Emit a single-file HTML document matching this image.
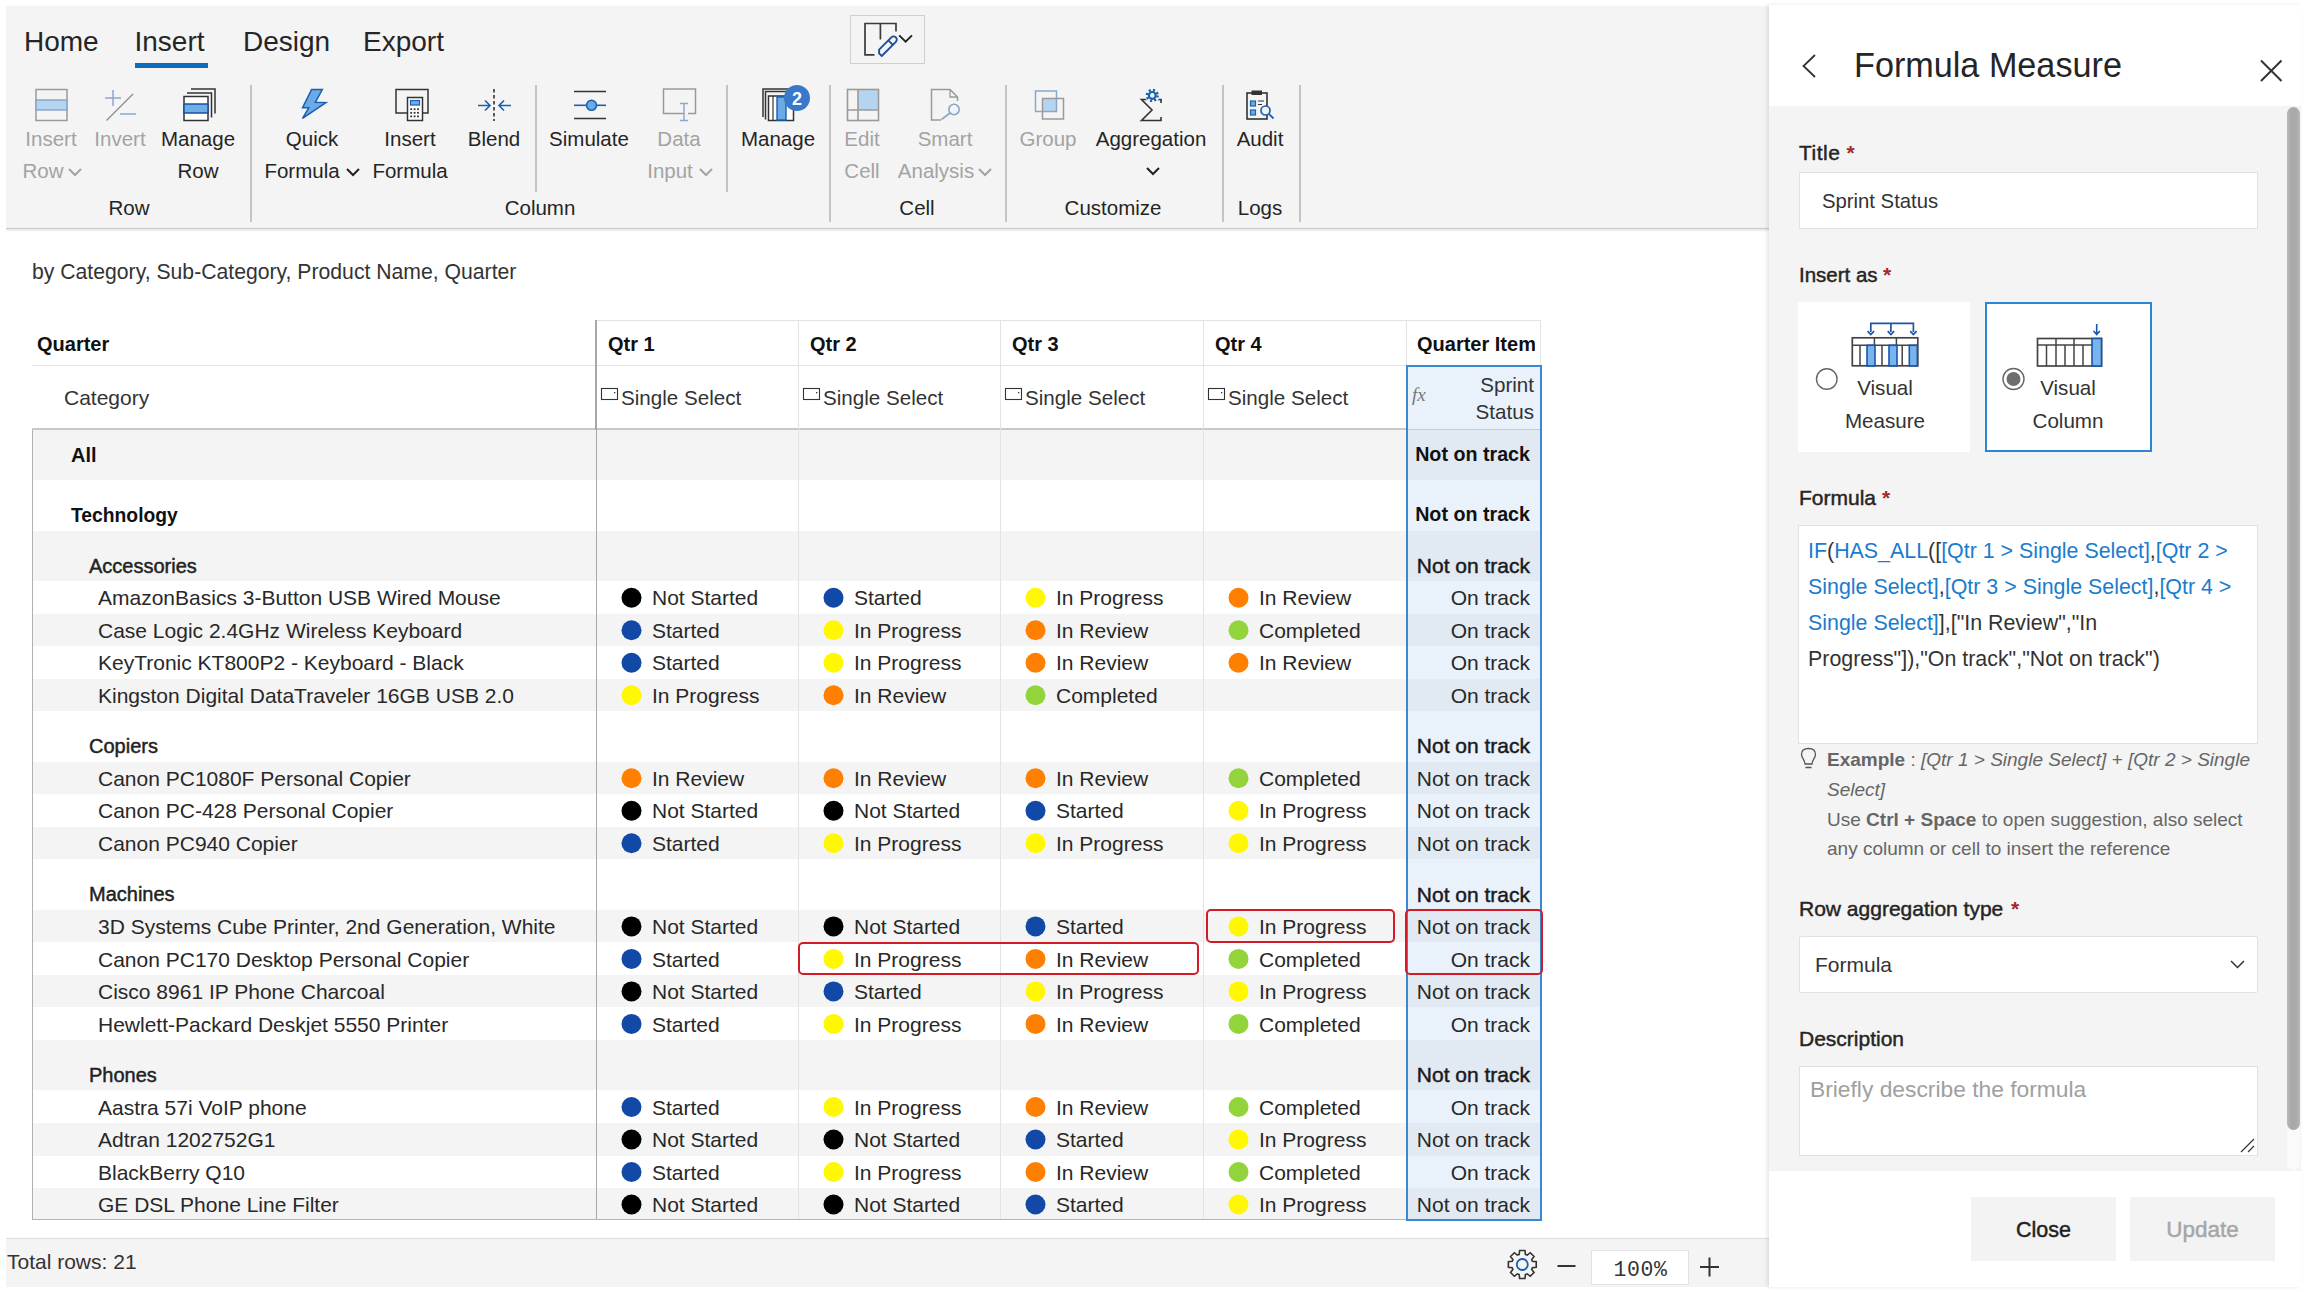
<!DOCTYPE html>
<html><head><meta charset="utf-8"><title>Formula Measure</title>
<style>
html,body{margin:0;padding:0;}
body{width:2304px;height:1292px;position:relative;overflow:hidden;background:#fff;font-family:"Liberation Sans",sans-serif;}
.t{position:absolute;white-space:pre;}
.r{position:absolute;}
svg.ov{position:absolute;left:0;top:0;}
</style></head><body>

<div class="r" style="left:6px;top:6px;width:1763px;height:222px;background:#f4f4f4;"></div>
<div class="r" style="left:6px;top:227px;width:1763px;height:1px;background:#f0f0f0;"></div>
<div class="r" style="left:6px;top:228px;width:1763px;height:1px;background:#cccccc;"></div>
<div class="r" style="left:6px;top:229px;width:1763px;height:3px;background:linear-gradient(#e4e4e4,#ffffff);"></div>
<div class="t" style="top:28.30px;font-size:28px;line-height:28px;color:#252525;left:24.00px;">Home</div>
<div class="t" style="top:28.30px;font-size:28px;line-height:28px;color:#252525;left:134.50px;">Insert</div>
<div class="t" style="top:28.30px;font-size:28px;line-height:28px;color:#252525;left:243.00px;">Design</div>
<div class="t" style="top:28.30px;font-size:28px;line-height:28px;color:#252525;left:363.00px;">Export</div>
<div class="r" style="left:135px;top:63px;width:73px;height:5px;background:#0f6cbd;"></div>
<div class="r" style="left:850px;top:15px;width:75px;height:49px;box-sizing:border-box;border:1px solid #cfcfcf;"></div>
<div class="r" style="left:250px;top:85px;width:2px;height:137px;background:#c4c4c4;"></div>
<div class="r" style="left:535px;top:85px;width:2px;height:107px;background:#c4c4c4;"></div>
<div class="r" style="left:726px;top:85px;width:2px;height:107px;background:#c4c4c4;"></div>
<div class="r" style="left:829px;top:85px;width:2px;height:137px;background:#c4c4c4;"></div>
<div class="r" style="left:1005px;top:85px;width:2px;height:137px;background:#c4c4c4;"></div>
<div class="r" style="left:1222px;top:85px;width:2px;height:137px;background:#c4c4c4;"></div>
<div class="r" style="left:1299px;top:85px;width:2px;height:137px;background:#c4c4c4;"></div>
<div class="t" style="top:128.65px;font-size:20.5px;line-height:20.5px;color:#a3a3a3;left:-549.00px;width:1200px;text-align:center;">Insert</div>
<div class="t" style="top:160.65px;font-size:20.5px;line-height:20.5px;color:#a3a3a3;left:-557.00px;width:1200px;text-align:center;">Row</div>
<div class="t" style="top:128.65px;font-size:20.5px;line-height:20.5px;color:#a3a3a3;left:-480.00px;width:1200px;text-align:center;">Invert</div>
<div class="t" style="top:128.65px;font-size:20.5px;line-height:20.5px;color:#252525;left:-402.00px;width:1200px;text-align:center;">Manage</div>
<div class="t" style="top:160.65px;font-size:20.5px;line-height:20.5px;color:#252525;left:-402.00px;width:1200px;text-align:center;">Row</div>
<div class="t" style="top:197.65px;font-size:20.5px;line-height:20.5px;color:#252525;left:-471.00px;width:1200px;text-align:center;">Row</div>
<div class="t" style="top:128.65px;font-size:20.5px;line-height:20.5px;color:#252525;left:-288.00px;width:1200px;text-align:center;">Quick</div>
<div class="t" style="top:160.65px;font-size:20.5px;line-height:20.5px;color:#252525;left:-298.00px;width:1200px;text-align:center;">Formula</div>
<div class="t" style="top:128.65px;font-size:20.5px;line-height:20.5px;color:#252525;left:-190.00px;width:1200px;text-align:center;">Insert</div>
<div class="t" style="top:160.65px;font-size:20.5px;line-height:20.5px;color:#252525;left:-190.00px;width:1200px;text-align:center;">Formula</div>
<div class="t" style="top:128.65px;font-size:20.5px;line-height:20.5px;color:#252525;left:-106.00px;width:1200px;text-align:center;">Blend</div>
<div class="t" style="top:128.65px;font-size:20.5px;line-height:20.5px;color:#252525;left:-11.00px;width:1200px;text-align:center;">Simulate</div>
<div class="t" style="top:128.65px;font-size:20.5px;line-height:20.5px;color:#a3a3a3;left:79.00px;width:1200px;text-align:center;">Data</div>
<div class="t" style="top:160.65px;font-size:20.5px;line-height:20.5px;color:#a3a3a3;left:70.00px;width:1200px;text-align:center;">Input</div>
<div class="t" style="top:128.65px;font-size:20.5px;line-height:20.5px;color:#252525;left:178.00px;width:1200px;text-align:center;">Manage</div>
<div class="t" style="top:197.65px;font-size:20.5px;line-height:20.5px;color:#252525;left:-60.00px;width:1200px;text-align:center;">Column</div>
<div class="t" style="top:128.65px;font-size:20.5px;line-height:20.5px;color:#a3a3a3;left:262.00px;width:1200px;text-align:center;">Edit</div>
<div class="t" style="top:160.65px;font-size:20.5px;line-height:20.5px;color:#a3a3a3;left:262.00px;width:1200px;text-align:center;">Cell</div>
<div class="t" style="top:128.65px;font-size:20.5px;line-height:20.5px;color:#a3a3a3;left:345.00px;width:1200px;text-align:center;">Smart</div>
<div class="t" style="top:160.65px;font-size:20.5px;line-height:20.5px;color:#a3a3a3;left:336.00px;width:1200px;text-align:center;">Analysis</div>
<div class="t" style="top:197.65px;font-size:20.5px;line-height:20.5px;color:#252525;left:317.00px;width:1200px;text-align:center;">Cell</div>
<div class="t" style="top:128.65px;font-size:20.5px;line-height:20.5px;color:#a3a3a3;left:448.00px;width:1200px;text-align:center;">Group</div>
<div class="t" style="top:128.65px;font-size:20.5px;line-height:20.5px;color:#252525;left:551.00px;width:1200px;text-align:center;">Aggregation</div>
<div class="t" style="top:197.65px;font-size:20.5px;line-height:20.5px;color:#252525;left:513.00px;width:1200px;text-align:center;">Customize</div>
<div class="t" style="top:128.65px;font-size:20.5px;line-height:20.5px;color:#252525;left:660.00px;width:1200px;text-align:center;">Audit</div>
<div class="t" style="top:197.65px;font-size:20.5px;line-height:20.5px;color:#252525;left:660.00px;width:1200px;text-align:center;">Logs</div>
<div class="t" style="top:261.05px;font-size:21.2px;line-height:21.2px;color:#333;left:32.00px;">by Category, Sub-Category, Product Name, Quarter</div>
<div class="r" style="left:596px;top:320px;width:945px;height:1px;background:#e3e3e3;"></div>
<div class="r" style="left:32px;top:365px;width:1374px;height:1px;background:#e3e3e3;"></div>
<div class="r" style="left:32px;top:428px;width:1509px;height:2px;background:#c8c8c8;"></div>
<div class="r" style="left:595px;top:320px;width:2px;height:110px;background:#a8a8a8;"></div>
<div class="r" style="left:798px;top:320px;width:1px;height:110px;background:#e3e3e3;"></div>
<div class="r" style="left:1000px;top:320px;width:1px;height:110px;background:#e3e3e3;"></div>
<div class="r" style="left:1203px;top:320px;width:1px;height:110px;background:#e3e3e3;"></div>
<div class="r" style="left:1406px;top:320px;width:1px;height:110px;background:#e3e3e3;"></div>
<div class="r" style="left:1540px;top:320px;width:1px;height:46px;background:#e3e3e3;"></div>
<div class="t" style="top:334.07px;font-size:20px;line-height:20px;color:#111;font-weight:bold;left:37.00px;">Quarter</div>
<div class="t" style="top:334.07px;font-size:20px;line-height:20px;color:#111;font-weight:bold;left:608.00px;">Qtr 1</div>
<div class="t" style="top:334.07px;font-size:20px;line-height:20px;color:#111;font-weight:bold;left:810.00px;">Qtr 2</div>
<div class="t" style="top:334.07px;font-size:20px;line-height:20px;color:#111;font-weight:bold;left:1012.00px;">Qtr 3</div>
<div class="t" style="top:334.07px;font-size:20px;line-height:20px;color:#111;font-weight:bold;left:1215.00px;">Qtr 4</div>
<div class="t" style="top:334.07px;font-size:20px;line-height:20px;color:#111;font-weight:bold;left:1417.00px;width:118px;overflow:hidden;white-space:nowrap;">Quarter Item</div>
<div class="t" style="top:387.22px;font-size:21px;line-height:21px;color:#333;left:64.00px;">Category</div>
<div class="t" style="top:387.56px;font-size:20.6px;line-height:20.6px;color:#333;left:621.00px;">Single Select</div>
<div class="t" style="top:387.56px;font-size:20.6px;line-height:20.6px;color:#333;left:823.00px;">Single Select</div>
<div class="t" style="top:387.56px;font-size:20.6px;line-height:20.6px;color:#333;left:1025.00px;">Single Select</div>
<div class="t" style="top:387.56px;font-size:20.6px;line-height:20.6px;color:#333;left:1228.00px;">Single Select</div>
<div class="r" style="left:1406px;top:366px;width:135px;height:63px;background:#e9f1fb;"></div>
<div class="t" style="top:384.92px;font-size:19px;line-height:19px;color:#777;font-style:italic;font-family:'Liberation Serif',serif;left:1412.00px;">fx</div>
<div class="t" style="top:374.56px;font-size:20.6px;line-height:20.6px;color:#333;right:770.00px;text-align:right;">Sprint</div>
<div class="t" style="top:401.56px;font-size:20.6px;line-height:20.6px;color:#333;right:770.00px;text-align:right;">Status</div>
<div class="r" style="left:32px;top:430px;width:1374px;height:50px;background:#f4f4f4;"></div>
<div class="r" style="left:1406px;top:430px;width:135px;height:50px;background:#e1e9f2;"></div>
<div class="t" style="top:445.07px;font-size:20px;line-height:20px;color:#111;font-weight:bold;left:71.00px;">All</div>
<div class="t" style="top:445.32px;font-size:19.7px;line-height:19.7px;color:#111;font-weight:bold;right:774.00px;text-align:right;">Not on track</div>
<div class="r" style="left:1406px;top:480px;width:135px;height:51px;background:#e9f1fb;"></div>
<div class="t" style="top:505.66px;font-size:19.3px;line-height:19.3px;color:#111;font-weight:bold;left:71.00px;">Technology</div>
<div class="t" style="top:505.32px;font-size:19.7px;line-height:19.7px;color:#111;font-weight:bold;right:774.00px;text-align:right;">Not on track</div>
<div class="r" style="left:32px;top:531px;width:1374px;height:50px;background:#f4f4f4;"></div>
<div class="r" style="left:1406px;top:531px;width:135px;height:50px;background:#e1e9f2;"></div>
<div class="t" style="top:555.67px;font-size:20px;line-height:20px;color:#222;-webkit-text-stroke:0.45px #222;left:89.00px;">Accessories</div>
<div class="t" style="top:554.82px;font-size:21px;line-height:21px;color:#1a1a1a;-webkit-text-stroke:0.45px #1a1a1a;right:774.00px;text-align:right;">Not on track</div>
<div class="r" style="left:1406px;top:581px;width:135px;height:33px;background:#e9f1fb;"></div>
<div class="t" style="top:587.32px;font-size:21px;line-height:21px;color:#282828;left:98.00px;">AmazonBasics 3-Button USB Wired Mouse</div>
<div class="t" style="top:587.32px;font-size:21px;line-height:21px;color:#282828;left:652.00px;">Not Started</div>
<div class="t" style="top:587.32px;font-size:21px;line-height:21px;color:#282828;left:854.00px;">Started</div>
<div class="t" style="top:587.32px;font-size:21px;line-height:21px;color:#282828;left:1056.00px;">In Progress</div>
<div class="t" style="top:587.32px;font-size:21px;line-height:21px;color:#282828;left:1259.00px;">In Review</div>
<div class="t" style="top:587.32px;font-size:21px;line-height:21px;color:#282828;right:774.00px;text-align:right;">On track</div>
<div class="r" style="left:32px;top:614px;width:1374px;height:32px;background:#f4f4f4;"></div>
<div class="r" style="left:1406px;top:614px;width:135px;height:32px;background:#e1e9f2;"></div>
<div class="t" style="top:619.82px;font-size:21px;line-height:21px;color:#282828;left:98.00px;">Case Logic 2.4GHz Wireless Keyboard</div>
<div class="t" style="top:619.82px;font-size:21px;line-height:21px;color:#282828;left:652.00px;">Started</div>
<div class="t" style="top:619.82px;font-size:21px;line-height:21px;color:#282828;left:854.00px;">In Progress</div>
<div class="t" style="top:619.82px;font-size:21px;line-height:21px;color:#282828;left:1056.00px;">In Review</div>
<div class="t" style="top:619.82px;font-size:21px;line-height:21px;color:#282828;left:1259.00px;">Completed</div>
<div class="t" style="top:619.82px;font-size:21px;line-height:21px;color:#282828;right:774.00px;text-align:right;">On track</div>
<div class="r" style="left:1406px;top:646px;width:135px;height:33px;background:#e9f1fb;"></div>
<div class="t" style="top:652.32px;font-size:21px;line-height:21px;color:#282828;left:98.00px;">KeyTronic KT800P2 - Keyboard - Black</div>
<div class="t" style="top:652.32px;font-size:21px;line-height:21px;color:#282828;left:652.00px;">Started</div>
<div class="t" style="top:652.32px;font-size:21px;line-height:21px;color:#282828;left:854.00px;">In Progress</div>
<div class="t" style="top:652.32px;font-size:21px;line-height:21px;color:#282828;left:1056.00px;">In Review</div>
<div class="t" style="top:652.32px;font-size:21px;line-height:21px;color:#282828;left:1259.00px;">In Review</div>
<div class="t" style="top:652.32px;font-size:21px;line-height:21px;color:#282828;right:774.00px;text-align:right;">On track</div>
<div class="r" style="left:32px;top:679px;width:1374px;height:32px;background:#f4f4f4;"></div>
<div class="r" style="left:1406px;top:679px;width:135px;height:32px;background:#e1e9f2;"></div>
<div class="t" style="top:684.82px;font-size:21px;line-height:21px;color:#282828;left:98.00px;">Kingston Digital DataTraveler 16GB USB 2.0</div>
<div class="t" style="top:684.82px;font-size:21px;line-height:21px;color:#282828;left:652.00px;">In Progress</div>
<div class="t" style="top:684.82px;font-size:21px;line-height:21px;color:#282828;left:854.00px;">In Review</div>
<div class="t" style="top:684.82px;font-size:21px;line-height:21px;color:#282828;left:1056.00px;">Completed</div>
<div class="t" style="top:684.82px;font-size:21px;line-height:21px;color:#282828;right:774.00px;text-align:right;">On track</div>
<div class="r" style="left:1406px;top:711px;width:135px;height:51px;background:#e9f1fb;"></div>
<div class="t" style="top:736.27px;font-size:20px;line-height:20px;color:#222;-webkit-text-stroke:0.45px #222;left:89.00px;">Copiers</div>
<div class="t" style="top:735.42px;font-size:21px;line-height:21px;color:#1a1a1a;-webkit-text-stroke:0.45px #1a1a1a;right:774.00px;text-align:right;">Not on track</div>
<div class="r" style="left:32px;top:762px;width:1374px;height:32px;background:#f4f4f4;"></div>
<div class="r" style="left:1406px;top:762px;width:135px;height:32px;background:#e1e9f2;"></div>
<div class="t" style="top:767.92px;font-size:21px;line-height:21px;color:#282828;left:98.00px;">Canon PC1080F Personal Copier</div>
<div class="t" style="top:767.92px;font-size:21px;line-height:21px;color:#282828;left:652.00px;">In Review</div>
<div class="t" style="top:767.92px;font-size:21px;line-height:21px;color:#282828;left:854.00px;">In Review</div>
<div class="t" style="top:767.92px;font-size:21px;line-height:21px;color:#282828;left:1056.00px;">In Review</div>
<div class="t" style="top:767.92px;font-size:21px;line-height:21px;color:#282828;left:1259.00px;">Completed</div>
<div class="t" style="top:767.92px;font-size:21px;line-height:21px;color:#282828;right:774.00px;text-align:right;">Not on track</div>
<div class="r" style="left:1406px;top:794px;width:135px;height:33px;background:#e9f1fb;"></div>
<div class="t" style="top:800.42px;font-size:21px;line-height:21px;color:#282828;left:98.00px;">Canon PC-428 Personal Copier</div>
<div class="t" style="top:800.42px;font-size:21px;line-height:21px;color:#282828;left:652.00px;">Not Started</div>
<div class="t" style="top:800.42px;font-size:21px;line-height:21px;color:#282828;left:854.00px;">Not Started</div>
<div class="t" style="top:800.42px;font-size:21px;line-height:21px;color:#282828;left:1056.00px;">Started</div>
<div class="t" style="top:800.42px;font-size:21px;line-height:21px;color:#282828;left:1259.00px;">In Progress</div>
<div class="t" style="top:800.42px;font-size:21px;line-height:21px;color:#282828;right:774.00px;text-align:right;">Not on track</div>
<div class="r" style="left:32px;top:827px;width:1374px;height:32px;background:#f4f4f4;"></div>
<div class="r" style="left:1406px;top:827px;width:135px;height:32px;background:#e1e9f2;"></div>
<div class="t" style="top:832.92px;font-size:21px;line-height:21px;color:#282828;left:98.00px;">Canon PC940 Copier</div>
<div class="t" style="top:832.92px;font-size:21px;line-height:21px;color:#282828;left:652.00px;">Started</div>
<div class="t" style="top:832.92px;font-size:21px;line-height:21px;color:#282828;left:854.00px;">In Progress</div>
<div class="t" style="top:832.92px;font-size:21px;line-height:21px;color:#282828;left:1056.00px;">In Progress</div>
<div class="t" style="top:832.92px;font-size:21px;line-height:21px;color:#282828;left:1259.00px;">In Progress</div>
<div class="t" style="top:832.92px;font-size:21px;line-height:21px;color:#282828;right:774.00px;text-align:right;">Not on track</div>
<div class="r" style="left:1406px;top:859px;width:135px;height:51px;background:#e9f1fb;"></div>
<div class="t" style="top:884.37px;font-size:20px;line-height:20px;color:#222;-webkit-text-stroke:0.45px #222;left:89.00px;">Machines</div>
<div class="t" style="top:883.52px;font-size:21px;line-height:21px;color:#1a1a1a;-webkit-text-stroke:0.45px #1a1a1a;right:774.00px;text-align:right;">Not on track</div>
<div class="r" style="left:32px;top:910px;width:1374px;height:32px;background:#f4f4f4;"></div>
<div class="r" style="left:1406px;top:910px;width:135px;height:32px;background:#e1e9f2;"></div>
<div class="t" style="top:916.02px;font-size:21px;line-height:21px;color:#282828;left:98.00px;">3D Systems Cube Printer, 2nd Generation, White</div>
<div class="t" style="top:916.02px;font-size:21px;line-height:21px;color:#282828;left:652.00px;">Not Started</div>
<div class="t" style="top:916.02px;font-size:21px;line-height:21px;color:#282828;left:854.00px;">Not Started</div>
<div class="t" style="top:916.02px;font-size:21px;line-height:21px;color:#282828;left:1056.00px;">Started</div>
<div class="t" style="top:916.02px;font-size:21px;line-height:21px;color:#282828;left:1259.00px;">In Progress</div>
<div class="t" style="top:916.02px;font-size:21px;line-height:21px;color:#282828;right:774.00px;text-align:right;">Not on track</div>
<div class="r" style="left:1406px;top:942px;width:135px;height:33px;background:#e9f1fb;"></div>
<div class="t" style="top:948.52px;font-size:21px;line-height:21px;color:#282828;left:98.00px;">Canon PC170 Desktop Personal Copier</div>
<div class="t" style="top:948.52px;font-size:21px;line-height:21px;color:#282828;left:652.00px;">Started</div>
<div class="t" style="top:948.52px;font-size:21px;line-height:21px;color:#282828;left:854.00px;">In Progress</div>
<div class="t" style="top:948.52px;font-size:21px;line-height:21px;color:#282828;left:1056.00px;">In Review</div>
<div class="t" style="top:948.52px;font-size:21px;line-height:21px;color:#282828;left:1259.00px;">Completed</div>
<div class="t" style="top:948.52px;font-size:21px;line-height:21px;color:#282828;right:774.00px;text-align:right;">On track</div>
<div class="r" style="left:32px;top:975px;width:1374px;height:32px;background:#f4f4f4;"></div>
<div class="r" style="left:1406px;top:975px;width:135px;height:32px;background:#e1e9f2;"></div>
<div class="t" style="top:981.02px;font-size:21px;line-height:21px;color:#282828;left:98.00px;">Cisco 8961 IP Phone Charcoal</div>
<div class="t" style="top:981.02px;font-size:21px;line-height:21px;color:#282828;left:652.00px;">Not Started</div>
<div class="t" style="top:981.02px;font-size:21px;line-height:21px;color:#282828;left:854.00px;">Started</div>
<div class="t" style="top:981.02px;font-size:21px;line-height:21px;color:#282828;left:1056.00px;">In Progress</div>
<div class="t" style="top:981.02px;font-size:21px;line-height:21px;color:#282828;left:1259.00px;">In Progress</div>
<div class="t" style="top:981.02px;font-size:21px;line-height:21px;color:#282828;right:774.00px;text-align:right;">Not on track</div>
<div class="r" style="left:1406px;top:1007px;width:135px;height:33px;background:#e9f1fb;"></div>
<div class="t" style="top:1013.52px;font-size:21px;line-height:21px;color:#282828;left:98.00px;">Hewlett-Packard Deskjet 5550 Printer</div>
<div class="t" style="top:1013.52px;font-size:21px;line-height:21px;color:#282828;left:652.00px;">Started</div>
<div class="t" style="top:1013.52px;font-size:21px;line-height:21px;color:#282828;left:854.00px;">In Progress</div>
<div class="t" style="top:1013.52px;font-size:21px;line-height:21px;color:#282828;left:1056.00px;">In Review</div>
<div class="t" style="top:1013.52px;font-size:21px;line-height:21px;color:#282828;left:1259.00px;">Completed</div>
<div class="t" style="top:1013.52px;font-size:21px;line-height:21px;color:#282828;right:774.00px;text-align:right;">On track</div>
<div class="r" style="left:32px;top:1040px;width:1374px;height:50px;background:#f4f4f4;"></div>
<div class="r" style="left:1406px;top:1040px;width:135px;height:50px;background:#e1e9f2;"></div>
<div class="t" style="top:1064.97px;font-size:20px;line-height:20px;color:#222;-webkit-text-stroke:0.45px #222;left:89.00px;">Phones</div>
<div class="t" style="top:1064.12px;font-size:21px;line-height:21px;color:#1a1a1a;-webkit-text-stroke:0.45px #1a1a1a;right:774.00px;text-align:right;">Not on track</div>
<div class="r" style="left:1406px;top:1090px;width:135px;height:33px;background:#e9f1fb;"></div>
<div class="t" style="top:1096.62px;font-size:21px;line-height:21px;color:#282828;left:98.00px;">Aastra 57i VoIP phone</div>
<div class="t" style="top:1096.62px;font-size:21px;line-height:21px;color:#282828;left:652.00px;">Started</div>
<div class="t" style="top:1096.62px;font-size:21px;line-height:21px;color:#282828;left:854.00px;">In Progress</div>
<div class="t" style="top:1096.62px;font-size:21px;line-height:21px;color:#282828;left:1056.00px;">In Review</div>
<div class="t" style="top:1096.62px;font-size:21px;line-height:21px;color:#282828;left:1259.00px;">Completed</div>
<div class="t" style="top:1096.62px;font-size:21px;line-height:21px;color:#282828;right:774.00px;text-align:right;">On track</div>
<div class="r" style="left:32px;top:1123px;width:1374px;height:33px;background:#f4f4f4;"></div>
<div class="r" style="left:1406px;top:1123px;width:135px;height:33px;background:#e1e9f2;"></div>
<div class="t" style="top:1129.12px;font-size:21px;line-height:21px;color:#282828;left:98.00px;">Adtran 1202752G1</div>
<div class="t" style="top:1129.12px;font-size:21px;line-height:21px;color:#282828;left:652.00px;">Not Started</div>
<div class="t" style="top:1129.12px;font-size:21px;line-height:21px;color:#282828;left:854.00px;">Not Started</div>
<div class="t" style="top:1129.12px;font-size:21px;line-height:21px;color:#282828;left:1056.00px;">Started</div>
<div class="t" style="top:1129.12px;font-size:21px;line-height:21px;color:#282828;left:1259.00px;">In Progress</div>
<div class="t" style="top:1129.12px;font-size:21px;line-height:21px;color:#282828;right:774.00px;text-align:right;">Not on track</div>
<div class="r" style="left:1406px;top:1156px;width:135px;height:32px;background:#e9f1fb;"></div>
<div class="t" style="top:1161.62px;font-size:21px;line-height:21px;color:#282828;left:98.00px;">BlackBerry Q10</div>
<div class="t" style="top:1161.62px;font-size:21px;line-height:21px;color:#282828;left:652.00px;">Started</div>
<div class="t" style="top:1161.62px;font-size:21px;line-height:21px;color:#282828;left:854.00px;">In Progress</div>
<div class="t" style="top:1161.62px;font-size:21px;line-height:21px;color:#282828;left:1056.00px;">In Review</div>
<div class="t" style="top:1161.62px;font-size:21px;line-height:21px;color:#282828;left:1259.00px;">Completed</div>
<div class="t" style="top:1161.62px;font-size:21px;line-height:21px;color:#282828;right:774.00px;text-align:right;">On track</div>
<div class="r" style="left:32px;top:1188px;width:1374px;height:32px;background:#f4f4f4;"></div>
<div class="r" style="left:1406px;top:1188px;width:135px;height:32px;background:#e1e9f2;"></div>
<div class="t" style="top:1194.12px;font-size:21px;line-height:21px;color:#282828;left:98.00px;">GE DSL Phone Line Filter</div>
<div class="t" style="top:1194.12px;font-size:21px;line-height:21px;color:#282828;left:652.00px;">Not Started</div>
<div class="t" style="top:1194.12px;font-size:21px;line-height:21px;color:#282828;left:854.00px;">Not Started</div>
<div class="t" style="top:1194.12px;font-size:21px;line-height:21px;color:#282828;left:1056.00px;">Started</div>
<div class="t" style="top:1194.12px;font-size:21px;line-height:21px;color:#282828;left:1259.00px;">In Progress</div>
<div class="t" style="top:1194.12px;font-size:21px;line-height:21px;color:#282828;right:774.00px;text-align:right;">Not on track</div>
<div class="r" style="left:32px;top:430px;width:1px;height:790px;background:#b0b0b0;"></div>
<div class="r" style="left:596px;top:430px;width:1px;height:790px;background:#a8a8a8;"></div>
<div class="r" style="left:798px;top:430px;width:1px;height:790px;background:#e3e3e3;"></div>
<div class="r" style="left:1000px;top:430px;width:1px;height:790px;background:#e3e3e3;"></div>
<div class="r" style="left:1203px;top:430px;width:1px;height:790px;background:#e3e3e3;"></div>
<div class="r" style="left:32px;top:1219px;width:1374px;height:1px;background:#b5b5b5;"></div>
<div class="r" style="left:1406px;top:365px;width:136px;height:856px;box-sizing:border-box;border:2px solid #3a88d0;"></div>
<div class="r" style="left:798px;top:942px;width:401px;height:33px;box-sizing:border-box;border:2.6px solid #d41a26;border-radius:5px;"></div>
<div class="r" style="left:1206px;top:909px;width:189px;height:34px;box-sizing:border-box;border:2.6px solid #d41a26;border-radius:5px;"></div>
<div class="r" style="left:1405px;top:909px;width:138px;height:66px;box-sizing:border-box;border:2.6px solid #d41a26;border-radius:5px;"></div>
<div class="r" style="left:6px;top:1238px;width:1763px;height:1px;background:#dedede;"></div>
<div class="r" style="left:6px;top:1239px;width:1763px;height:48px;background:#f4f4f4;"></div>
<div class="t" style="top:1251.22px;font-size:21px;line-height:21px;color:#333;left:7.00px;">Total rows: 21</div>
<div class="r" style="left:1591px;top:1250px;width:98px;height:35px;background:#fff;box-sizing:border-box;border:1px solid #e2e2e2;"></div>
<div class="t" style="top:1259.80px;font-size:21.5px;line-height:21.5px;color:#333;font-family:'Liberation Mono',monospace;letter-spacing:0.6px;left:1040.50px;width:1200px;text-align:center;">100%</div>
<div class="r" style="left:1769px;top:5px;width:532px;height:1282px;background:#fff;box-shadow:-2px 0 4px rgba(0,0,0,0.10);"></div>
<div class="r" style="left:1769px;top:106px;width:532px;height:1065px;background:#f4f4f4;"></div>
<div class="r" style="left:2287px;top:107px;width:13px;height:1063px;background:#fafafa;border-radius:6.5px;"></div>
<div class="r" style="left:2287px;top:107px;width:13px;height:1023px;background:linear-gradient(90deg,#b9b9b9,#a9a9a9 30%,#a9a9a9 70%,#b9b9b9);border-radius:6.5px;"></div>
<div class="t" style="top:48.05px;font-size:34.2px;line-height:34.2px;color:#252525;left:1854.00px;">Formula Measure</div>
<div class="t" style="top:141.72px;font-size:21px;line-height:21px;color:#252525;-webkit-text-stroke:0.45px #252525;letter-spacing:0.5px;left:1799.00px;">Title</div>
<div class="t" style="top:141.72px;font-size:21px;line-height:21px;color:#a4262c;font-weight:bold;left:1846.50px;">*</div>
<div class="r" style="left:1799px;top:172px;width:459px;height:57px;background:#fff;box-sizing:border-box;border:1px solid #e1e1e1;"></div>
<div class="t" style="top:190.82px;font-size:20.3px;line-height:20.3px;color:#333;left:1822.00px;">Sprint Status</div>
<div class="t" style="top:264.65px;font-size:20.5px;line-height:20.5px;color:#252525;-webkit-text-stroke:0.45px #252525;left:1799.00px;">Insert as</div>
<div class="t" style="top:264.22px;font-size:21px;line-height:21px;color:#a4262c;font-weight:bold;left:1883.00px;">*</div>
<div class="r" style="left:1798px;top:302px;width:172px;height:150px;background:#fff;"></div>
<div class="r" style="left:1985px;top:302px;width:167px;height:150px;background:#fff;box-sizing:border-box;border:2px solid #2c86d6;"></div>
<div class="t" style="top:378.06px;font-size:20.6px;line-height:20.6px;color:#333;left:1285.00px;width:1200px;text-align:center;">Visual</div>
<div class="t" style="top:410.56px;font-size:20.6px;line-height:20.6px;color:#333;left:1285.00px;width:1200px;text-align:center;">Measure</div>
<div class="t" style="top:378.06px;font-size:20.6px;line-height:20.6px;color:#333;left:1468.00px;width:1200px;text-align:center;">Visual</div>
<div class="t" style="top:410.56px;font-size:20.6px;line-height:20.6px;color:#333;left:1468.00px;width:1200px;text-align:center;">Column</div>
<div class="t" style="top:487.22px;font-size:21px;line-height:21px;color:#252525;-webkit-text-stroke:0.45px #252525;left:1799.00px;">Formula</div>
<div class="t" style="top:487.22px;font-size:21px;line-height:21px;color:#a4262c;font-weight:bold;left:1882.00px;">*</div>
<div class="r" style="left:1798px;top:525px;width:460px;height:219px;background:#fff;box-sizing:border-box;border:1px solid #e1e1e1;"></div>
<div class="t" style="top:540.88px;font-size:21.4px;line-height:21.4px;color:#333;left:1808.00px;white-space:nowrap;"><span style="color:#1a7ccd">IF</span><span style="color:#333">(</span><span style="color:#1a7ccd">HAS_ALL</span><span style="color:#333">([</span><span style="color:#1a7ccd">[Qtr 1 &gt; Single Select]</span><span style="color:#333">,</span><span style="color:#1a7ccd">[Qtr 2 &gt;</span></div>
<div class="t" style="top:576.88px;font-size:21.4px;line-height:21.4px;color:#333;left:1808.00px;white-space:nowrap;"><span style="color:#1a7ccd">Single Select]</span><span style="color:#333">,</span><span style="color:#1a7ccd">[Qtr 3 &gt; Single Select]</span><span style="color:#333">,</span><span style="color:#1a7ccd">[Qtr 4 &gt;</span></div>
<div class="t" style="top:612.88px;font-size:21.4px;line-height:21.4px;color:#333;left:1808.00px;white-space:nowrap;"><span style="color:#1a7ccd">Single Select]</span><span style="color:#333">],["In Review","In</span></div>
<div class="t" style="top:648.88px;font-size:21.4px;line-height:21.4px;color:#333;left:1808.00px;white-space:nowrap;">Progress"]),"On track","Not on track")</div>
<div class="t" style="top:749.92px;font-size:19px;line-height:19px;color:#666;left:1827.00px;white-space:nowrap;"><b>Example</b> : <i>[Qtr 1 &gt; Single Select] + [Qtr 2 &gt; Single</i></div>
<div class="t" style="top:779.92px;font-size:19px;line-height:19px;color:#666;left:1827.00px;"><i>Select]</i></div>
<div class="t" style="top:809.92px;font-size:19px;line-height:19px;color:#666;left:1827.00px;white-space:nowrap;">Use <b>Ctrl + Space</b> to open suggestion, also select</div>
<div class="t" style="top:838.92px;font-size:19px;line-height:19px;color:#666;left:1827.00px;white-space:nowrap;">any column or cell to insert the reference</div>
<div class="t" style="top:898.22px;font-size:21px;line-height:21px;color:#252525;-webkit-text-stroke:0.45px #252525;left:1799.00px;">Row aggregation type</div>
<div class="t" style="top:898.22px;font-size:21px;line-height:21px;color:#a4262c;font-weight:bold;left:2011.00px;">*</div>
<div class="r" style="left:1799px;top:936px;width:459px;height:57px;background:#fff;box-sizing:border-box;border:1px solid #e1e1e1;border-radius:2px;"></div>
<div class="t" style="top:954.22px;font-size:21px;line-height:21px;color:#333;left:1815.00px;">Formula</div>
<div class="t" style="top:1028.22px;font-size:21px;line-height:21px;color:#252525;-webkit-text-stroke:0.45px #252525;left:1799.00px;">Description</div>
<div class="r" style="left:1799px;top:1066px;width:459px;height:90px;background:#fff;box-sizing:border-box;border:1px solid #e1e1e1;"></div>
<div class="t" style="top:1077.70px;font-size:22.8px;line-height:22.8px;color:#a0a0a0;left:1810.00px;">Briefly describe the formula</div>
<div class="r" style="left:1971px;top:1197px;width:145px;height:64px;background:#f3f3f3;"></div>
<div class="r" style="left:2130px;top:1197px;width:145px;height:64px;background:#f3f3f3;"></div>
<div class="t" style="top:1220.30px;font-size:21.5px;line-height:21.5px;color:#222;-webkit-text-stroke:0.45px #222;left:1443.50px;width:1200px;text-align:center;">Close</div>
<div class="t" style="top:1219.45px;font-size:22.5px;line-height:22.5px;color:#a6a6a6;-webkit-text-stroke:0.45px #a6a6a6;left:1602.50px;width:1200px;text-align:center;">Update</div>
<svg class="ov" width="2304" height="1292" viewBox="0 0 2304 1292">
<path d="M874.5 54.8 H865 V23.5 H896 V31.5 M880.4 23.5 V39.5" fill="none" stroke="#3a3a3a" stroke-width="1.7"/>
<g transform="translate(887.6,45.6) rotate(-45)"><path d="M-11.5 3.2 V-0.5 L-8.8 -3.2 H8.5 A3.2 3.2 0 0 1 8.5 3.2 Z" fill="#f4f4f4" stroke="#1a4fa0" stroke-width="1.9" stroke-linejoin="round"/><path d="M4.2 -3.2 V3.2" stroke="#1a4fa0" stroke-width="2"/></g>
<path d="M899.2 35.3 L905.6 41.7 L912 35.3" fill="none" stroke="#222" stroke-width="1.9"/>
<path d="M69 169 L75 175 L81 169" fill="none" stroke="#a3a3a3" stroke-width="2"/>
<path d="M347 169 L353 175 L359 169" fill="none" stroke="#222" stroke-width="2"/>
<path d="M700 169 L706 175 L712 169" fill="none" stroke="#a3a3a3" stroke-width="2"/>
<path d="M979 169 L985 175 L991 169" fill="none" stroke="#a3a3a3" stroke-width="2"/>
<path d="M1147 168 L1153 174 L1159 168" fill="none" stroke="#222" stroke-width="2"/>
<rect x="36" y="89.5" width="31" height="31" fill="none" stroke="#9a9a9a" stroke-width="1.5"/>
<rect x="36" y="100" width="31" height="10" fill="#b4d4f0" stroke="#8aa6c8" stroke-width="1.5"/>
<path d="M113 90 V106 M105 98 H121 M120 114 H136" stroke="#8aa6c8" stroke-width="1.5" fill="none"/>
<path d="M106.5 120.5 L133 94" stroke="#8c8c8c" stroke-width="1.3" fill="none"/>
<path d="M191 89 H215 V113.5 M187 93 H211.5 V117.5" stroke="#333" stroke-width="1.5" fill="none"/>
<rect x="184" y="96.5" width="24" height="24" fill="#fff" stroke="#333" stroke-width="1.5"/>
<rect x="184" y="104" width="24" height="9" fill="#6caee8" stroke="#1a4f9c" stroke-width="1.5"/>
<path d="M311.6 89.5 L322.3 89.5 L315.3 102.3 L325.9 102.6 L302.5 118.4 L308.75 107.8 L302.5 107.8 Z" fill="#6aaae6" stroke="#1b5fb0" stroke-width="1.5" stroke-linejoin="miter"/>
<path d="M407 113 H396 V89.5 H428 V113 H423" fill="none" stroke="#333" stroke-width="1.5"/>
<rect x="407.5" y="97.5" width="15" height="23" fill="#fff" stroke="#333" stroke-width="1.5"/>
<rect x="410.5" y="100.5" width="9" height="4.5" fill="#6caee8" stroke="#1b5fb0" stroke-width="1.2"/>
<rect x="410.3" y="108.3" width="1.8" height="1.8" fill="#333"/>
<rect x="410.3" y="111.9" width="1.8" height="1.8" fill="#333"/>
<rect x="410.3" y="115.5" width="1.8" height="1.8" fill="#333"/>
<rect x="413.7" y="108.3" width="1.8" height="1.8" fill="#333"/>
<rect x="413.7" y="111.9" width="1.8" height="1.8" fill="#333"/>
<rect x="413.7" y="115.5" width="1.8" height="1.8" fill="#333"/>
<rect x="417.1" y="108.3" width="1.8" height="1.8" fill="#333"/>
<rect x="417.1" y="111.9" width="1.8" height="1.8" fill="#333"/>
<rect x="417.1" y="115.5" width="1.8" height="1.8" fill="#333"/>
<path d="M494 89 V121" stroke="#333" stroke-width="1.6" stroke-dasharray="3.5 2.5" fill="none"/>
<path d="M478 105.5 H490 M485 100.5 L490 105.5 L485 110.5 M511 105.5 H499 M504 100.5 L499 105.5 L504 110.5" stroke="#1b5fb0" stroke-width="1.6" fill="none"/>
<path d="M574 91.5 H606 M574 118.5 H606" stroke="#333" stroke-width="1.6" fill="none"/>
<path d="M574 105.3 H606" stroke="#1b5fb0" stroke-width="1.6" fill="none"/>
<circle cx="591.5" cy="105.3" r="5" fill="#6aaae6" stroke="#1b5fb0" stroke-width="1.6"/>
<path d="M684 113.5 H663.5 V89 H695.5 V113.5 H688" fill="none" stroke="#9a9a9a" stroke-width="1.5"/>
<path d="M684 103.5 V120.5 M680 103.5 H688 M680 120.5 H688" stroke="#8aa6c8" stroke-width="1.4" fill="none"/>
<path d="M763 117 V89 H789 M765.5 119.5 V91.5 H791" stroke="#333" stroke-width="1.5" fill="none"/>
<rect x="768.5" y="96" width="25" height="24.5" fill="#fff" stroke="#333" stroke-width="1.5"/>
<path d="M773 96 V120.5" stroke="#333" stroke-width="1.2"/>
<rect x="777" y="97" width="9" height="23" fill="#6aaae6" stroke="#1b5fb0" stroke-width="1.4"/>
<circle cx="797" cy="98" r="13" fill="#3a78c9"/>
<text x="797" y="104.5" font-family="Liberation Sans" font-weight="bold" font-size="18" fill="#fff" text-anchor="middle">2</text>
<rect x="858" y="89.5" width="20.5" height="20.5" fill="#b4d4f0"/>
<rect x="847.5" y="89.5" width="31" height="31" fill="none" stroke="#9a9a9a" stroke-width="1.6"/>
<path d="M858 89.5 V120.5 M847.5 110 H878.5" stroke="#9a9a9a" stroke-width="1.6" fill="none"/>
<path d="M941 120 H931.5 V89.5 H950 L957.5 97 V101" fill="none" stroke="#9a9a9a" stroke-width="1.5"/>
<path d="M950 89.5 V97 H957.5" fill="none" stroke="#9a9a9a" stroke-width="1.3"/>
<circle cx="954" cy="109.5" r="5.2" fill="none" stroke="#8aa6c8" stroke-width="1.6"/>
<path d="M941.5 119.5 L950 113" stroke="#8aa6c8" stroke-width="1.6"/>
<rect x="1042.5" y="98.5" width="14" height="13" fill="#b4d4f0"/>
<rect x="1035.5" y="91" width="21" height="20.5" fill="none" stroke="#8aa6c8" stroke-width="1.5"/>
<rect x="1042.5" y="98.5" width="21" height="20.5" fill="none" stroke="#9a9a9a" stroke-width="1.5"/>
<path d="M1161 103 V99.5 H1141.5 L1152 110 L1141.5 120.5 H1161 V117" fill="none" stroke="#333" stroke-width="1.6"/>
<circle cx="1152.3" cy="95.4" r="7.5" fill="#f4f4f4"/>
<circle cx="1152.3" cy="95.4" r="3.4" fill="none" stroke="#1b5fb0" stroke-width="2.2"/>
<circle cx="1152.3" cy="95.4" r="5.4" fill="none" stroke="#1b5fb0" stroke-width="2.4" stroke-dasharray="2.1 2.14"/>
<rect x="1247" y="93" width="20" height="26" fill="none" stroke="#333" stroke-width="1.6"/>
<rect x="1251.5" y="90.5" width="10.5" height="4.5" fill="#333"/>
<rect x="1250.5" y="101" width="5" height="5" fill="#6aaae6" stroke="#1b5fb0" stroke-width="1.2"/>
<rect x="1250.5" y="110" width="5" height="5" fill="#6aaae6" stroke="#1b5fb0" stroke-width="1.2"/>
<path d="M1258 101 H1264 M1258 104.5 H1262" stroke="#333" stroke-width="1.2"/>
<circle cx="1265.5" cy="110.5" r="4.5" fill="#f4f4f4" stroke="#1b5fb0" stroke-width="1.7"/>
<path d="M1268.8 113.8 L1273.5 118.5" stroke="#1b5fb0" stroke-width="1.8"/>
<rect x="601.5" y="388.5" width="16" height="11" fill="none" stroke="#333" stroke-width="1.1"/>
<rect x="614" y="392" width="1.3" height="1.3" fill="#333"/>
<rect x="803.5" y="388.5" width="16" height="11" fill="none" stroke="#333" stroke-width="1.1"/>
<rect x="816" y="392" width="1.3" height="1.3" fill="#333"/>
<rect x="1005.5" y="388.5" width="16" height="11" fill="none" stroke="#333" stroke-width="1.1"/>
<rect x="1018" y="392" width="1.3" height="1.3" fill="#333"/>
<rect x="1208.5" y="388.5" width="16" height="11" fill="none" stroke="#333" stroke-width="1.1"/>
<rect x="1221" y="392" width="1.3" height="1.3" fill="#333"/>
<circle cx="631.5" cy="597.70" r="10" fill="#000000"/>
<circle cx="833.5" cy="597.70" r="10" fill="#1249a6"/>
<circle cx="1035.5" cy="597.70" r="10" fill="#fff800"/>
<circle cx="1238.5" cy="597.70" r="10" fill="#ff8000"/>
<circle cx="631.5" cy="630.20" r="10" fill="#1249a6"/>
<circle cx="833.5" cy="630.20" r="10" fill="#fff800"/>
<circle cx="1035.5" cy="630.20" r="10" fill="#ff8000"/>
<circle cx="1238.5" cy="630.20" r="10" fill="#93d43c"/>
<circle cx="631.5" cy="662.70" r="10" fill="#1249a6"/>
<circle cx="833.5" cy="662.70" r="10" fill="#fff800"/>
<circle cx="1035.5" cy="662.70" r="10" fill="#ff8000"/>
<circle cx="1238.5" cy="662.70" r="10" fill="#ff8000"/>
<circle cx="631.5" cy="695.20" r="10" fill="#fff800"/>
<circle cx="833.5" cy="695.20" r="10" fill="#ff8000"/>
<circle cx="1035.5" cy="695.20" r="10" fill="#93d43c"/>
<circle cx="631.5" cy="778.30" r="10" fill="#ff8000"/>
<circle cx="833.5" cy="778.30" r="10" fill="#ff8000"/>
<circle cx="1035.5" cy="778.30" r="10" fill="#ff8000"/>
<circle cx="1238.5" cy="778.30" r="10" fill="#93d43c"/>
<circle cx="631.5" cy="810.80" r="10" fill="#000000"/>
<circle cx="833.5" cy="810.80" r="10" fill="#000000"/>
<circle cx="1035.5" cy="810.80" r="10" fill="#1249a6"/>
<circle cx="1238.5" cy="810.80" r="10" fill="#fff800"/>
<circle cx="631.5" cy="843.30" r="10" fill="#1249a6"/>
<circle cx="833.5" cy="843.30" r="10" fill="#fff800"/>
<circle cx="1035.5" cy="843.30" r="10" fill="#fff800"/>
<circle cx="1238.5" cy="843.30" r="10" fill="#fff800"/>
<circle cx="631.5" cy="926.40" r="10" fill="#000000"/>
<circle cx="833.5" cy="926.40" r="10" fill="#000000"/>
<circle cx="1035.5" cy="926.40" r="10" fill="#1249a6"/>
<circle cx="1238.5" cy="926.40" r="10" fill="#fff800"/>
<circle cx="631.5" cy="958.90" r="10" fill="#1249a6"/>
<circle cx="833.5" cy="958.90" r="10" fill="#fff800"/>
<circle cx="1035.5" cy="958.90" r="10" fill="#ff8000"/>
<circle cx="1238.5" cy="958.90" r="10" fill="#93d43c"/>
<circle cx="631.5" cy="991.40" r="10" fill="#000000"/>
<circle cx="833.5" cy="991.40" r="10" fill="#1249a6"/>
<circle cx="1035.5" cy="991.40" r="10" fill="#fff800"/>
<circle cx="1238.5" cy="991.40" r="10" fill="#fff800"/>
<circle cx="631.5" cy="1023.90" r="10" fill="#1249a6"/>
<circle cx="833.5" cy="1023.90" r="10" fill="#fff800"/>
<circle cx="1035.5" cy="1023.90" r="10" fill="#ff8000"/>
<circle cx="1238.5" cy="1023.90" r="10" fill="#93d43c"/>
<circle cx="631.5" cy="1107.00" r="10" fill="#1249a6"/>
<circle cx="833.5" cy="1107.00" r="10" fill="#fff800"/>
<circle cx="1035.5" cy="1107.00" r="10" fill="#ff8000"/>
<circle cx="1238.5" cy="1107.00" r="10" fill="#93d43c"/>
<circle cx="631.5" cy="1139.50" r="10" fill="#000000"/>
<circle cx="833.5" cy="1139.50" r="10" fill="#000000"/>
<circle cx="1035.5" cy="1139.50" r="10" fill="#1249a6"/>
<circle cx="1238.5" cy="1139.50" r="10" fill="#fff800"/>
<circle cx="631.5" cy="1172.00" r="10" fill="#1249a6"/>
<circle cx="833.5" cy="1172.00" r="10" fill="#fff800"/>
<circle cx="1035.5" cy="1172.00" r="10" fill="#ff8000"/>
<circle cx="1238.5" cy="1172.00" r="10" fill="#93d43c"/>
<circle cx="631.5" cy="1204.50" r="10" fill="#000000"/>
<circle cx="833.5" cy="1204.50" r="10" fill="#000000"/>
<circle cx="1035.5" cy="1204.50" r="10" fill="#1249a6"/>
<circle cx="1238.5" cy="1204.50" r="10" fill="#fff800"/>
<polygon points="1536.24,1261.82 1536.24,1267.18 1532.43,1267.63 1531.68,1269.45 1534.06,1272.46 1530.26,1276.26 1527.25,1273.88 1525.43,1274.63 1524.98,1278.44 1519.62,1278.44 1519.17,1274.63 1517.35,1273.88 1514.34,1276.26 1510.54,1272.46 1512.92,1269.45 1512.17,1267.63 1508.36,1267.18 1508.36,1261.82 1512.17,1261.37 1512.92,1259.55 1510.54,1256.54 1514.34,1252.74 1517.35,1255.12 1519.17,1254.37 1519.62,1250.56 1524.98,1250.56 1525.43,1254.37 1527.25,1255.12 1530.26,1252.74 1534.06,1256.54 1531.68,1259.55 1532.43,1261.37" fill="none" stroke="#333" stroke-width="1.6" stroke-linejoin="miter"/>
<circle cx="1522.3" cy="1264.5" r="5.5" fill="none" stroke="#1b5fb0" stroke-width="1.8"/>
<path d="M1557.5 1266 H1575.5" stroke="#333" stroke-width="2"/>
<path d="M1700 1267 H1719 M1709.5 1257.5 V1276.5" stroke="#333" stroke-width="2"/>
<path d="M1815 55 L1803.5 66 L1815 77" fill="none" stroke="#333" stroke-width="1.8"/>
<path d="M2261 60.5 L2281.5 81 M2281.5 60.5 L2261 81" stroke="#333" stroke-width="2"/>
<circle cx="1826.8" cy="379" r="10.3" fill="#fff" stroke="#666" stroke-width="1.4"/>
<circle cx="2013.5" cy="379" r="10.5" fill="#fff" stroke="#666" stroke-width="1.4"/>
<circle cx="2013.5" cy="379" r="7" fill="#6e6e6e"/>
<rect x="1852.3" y="337.8" width="65.5" height="28" fill="#fff" stroke="#444" stroke-width="1.7"/>
<path d="M1852.3 345.3 H1917.8 M1874.4 337.8 V345.3 M1896.4 337.8 V345.3 M1860 345.3 V366 M1882 345.3 V366 M1902.2 345.3 V366" stroke="#444" stroke-width="1.5" fill="none"/>
<rect x="1867" y="345.3" width="8" height="20.6" fill="#78b4ee" stroke="#1a55a8" stroke-width="1.6"/>
<rect x="1889" y="345.3" width="8" height="20.6" fill="#78b4ee" stroke="#1a55a8" stroke-width="1.6"/>
<rect x="1909.3" y="345.3" width="8" height="20.6" fill="#78b4ee" stroke="#1a55a8" stroke-width="1.6"/>
<path d="M1870.8 332 V323.3 H1913.4 V332 M1890.9 323.3 V332" stroke="#1a55a8" stroke-width="1.7" fill="none"/>
<path d="M1867.6 331.2 L1870.8 334.5 L1874.0 331.2" stroke="#1a55a8" stroke-width="1.7" fill="none"/>
<path d="M1887.7 331.2 L1890.9 334.5 L1894.1000000000001 331.2" stroke="#1a55a8" stroke-width="1.7" fill="none"/>
<path d="M1910.2 331.2 L1913.4 334.5 L1916.6000000000001 331.2" stroke="#1a55a8" stroke-width="1.7" fill="none"/>
<rect x="2037.5" y="338.5" width="64" height="27.5" fill="#fff" stroke="#444" stroke-width="1.7"/>
<path d="M2037.5 345 H2092 M2046.5 345 V366 M2056 338.5 V366 M2065 345 V366 M2074 338.5 V366 M2083 345 V366" stroke="#444" stroke-width="1.5" fill="none"/>
<rect x="2092" y="338.5" width="9.5" height="27.5" fill="#78b4ee" stroke="#1a55a8" stroke-width="1.6"/>
<path d="M2096.7 324 V334 M2093.5 331 L2096.7 334.5 L2099.9 331" stroke="#1a55a8" stroke-width="1.6" fill="none"/>
<path d="M1805 764 C1805 760 1801.5 758 1801.5 754.5 C1801.5 750.5 1804.5 748.5 1808.5 748.5 C1812.5 748.5 1815.5 750.5 1815.5 754.5 C1815.5 758 1812 760 1812 764 Z M1805.5 767.5 H1811.5" fill="none" stroke="#555" stroke-width="1.3"/>
<path d="M2231 961 L2237.5 967.5 L2244 961" fill="none" stroke="#333" stroke-width="1.5"/>
<path d="M2241 1152 L2254 1139 M2248 1152 L2254 1146" stroke="#333" stroke-width="1.2"/>
</svg>
</body></html>
